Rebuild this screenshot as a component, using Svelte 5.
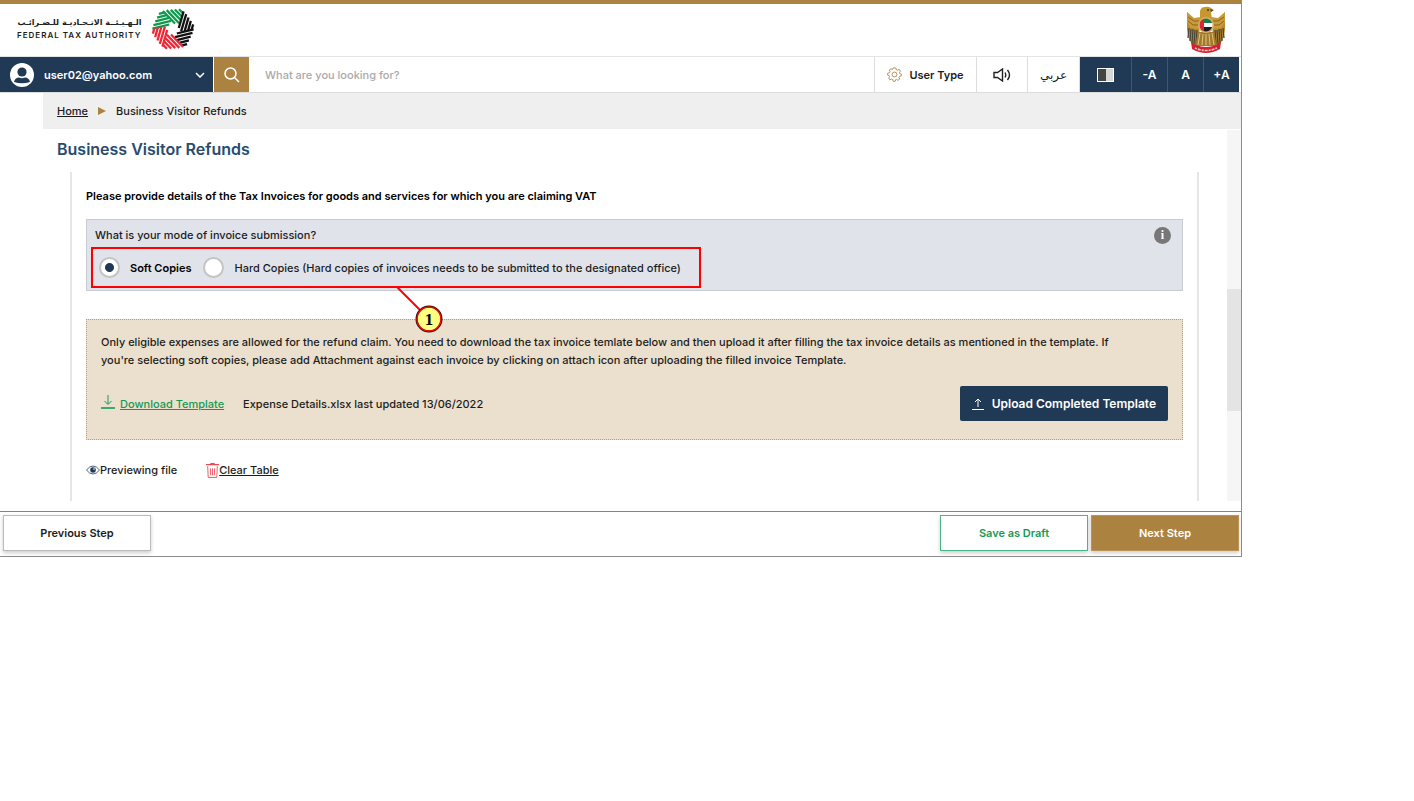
<script lang="ts">
	let search = $state('');
	let mode   = $state('soft');

	// Ring logo: six bundles of parallel strokes, turned around the centre
	const BUNDLES = [
		{ rot: -50, color: '#0b9a4c' },
		{ rot: 10,  color: '#0b9a4c' },
		{ rot: 70,  color: '#111' },
		{ rot: 130, color: '#111' },
		{ rot: 190, color: '#ee2737' },
		{ rot: 250, color: '#ee2737' },
	];
	const STROKES = [
		'M-13 -16 L1 -5.8',
		'M-9.5 -17.5 L5 -6.8',
		'M-5.5 -18.5 L6 -10.2',
		'M-1.5 -19.5 L6.5 -13.8',
		'M2.5 -20.5 L7 -17.300',
	];

	const SIZES = ['-A', 'A', '+A'];
</script>

<div class="app">
	<header class="brand-bar">
		<a class="brand" href="#home">
			<span class="brand-text">
				<span class="brand-ar" lang="ar" dir="rtl">الـهـيـئــة الاتـحـاديـة للـضـرائـب</span>
				<span class="brand-en">FEDERAL TAX AUTHORITY</span>
			</span>
			<svg class="ring-logo" viewBox="-22 -22 44 44" aria-hidden="true">
				{#each BUNDLES as b}
					<g transform="rotate({b.rot})" stroke={b.color} stroke-width="2.300">
						{#each STROKES as d}
							<path {d} />
						{/each}
					</g>
				{/each}
			</svg>
		</a>

		<!-- Falcon emblem -->
		<svg class="emblem" viewBox="0 0 40 48" role="img" aria-label="United Arab Emirates emblem">
			<path d="M5 11 L1 6 V24 L3 33 L7 40 L14 37 L13 14 Z" fill="#b98a2c" />
			<path d="M35 11 L39 6 V24 L37 33 L33 40 L26 37 L27 14 Z" fill="#b98a2c" />
			<path d="M1 6 L8 12 L15 11 L16 20 L12 23 L5 22 L1 16 Z" fill="#c99a3a" />
			<path d="M39 6 L32 12 L25 11 L24 20 L28 23 L35 22 L39 16 Z" fill="#c99a3a" />
			<path d="M3 22 L2 32 M5 23 L4 35 M7 23 L6 37 M9 24 L8 38 M11 24 L10 38 M37 22 L38 32 M35 23 L36 35 M33 23 L34 37 M31 24 L32 38 M29 24 L30 38" stroke="#4b4638" stroke-width="1.300" />
			<path d="M2 11 L8 15 L14 15 M2 15 L7 19 L13 19 M38 11 L32 15 L26 15 M38 15 L33 19 L27 19" fill="none" stroke="#8d6519" stroke-width="1" />
			<path d="M14 14 L14 5 Q15 1 19 1 Q24 0 27 4 L25 6 L26 14 Z" fill="#c7972f" />
			<circle cx="22" cy="4" r="1" fill="#45370f" />
			<path d="M24 3 L28 4 L25 6 Z" fill="#5f4a1a" />
			<path d="M12 26 L28 26 L31 40 H9 Z" fill="#a37a2c" />
			<path d="M14 27 L12 39 M17 28 L16 39 M20 28 V39 M23 28 L24 39 M26 27 L28 39" stroke="#e2c681" stroke-width="1" />
			<circle cx="20" cy="19" r="8" fill="#d2b06a" />
			<clipPath id="disc"><circle cx="20" cy="19" r="6.500" /></clipPath>
			<g clip-path="url(#disc)">
				<path d="M13 12 H27 V17 H13 Z" fill="#16804a" />
				<path d="M13 17 H27 V21 H13 Z" fill="#fff" />
				<path d="M13 21 H27 V26 H13 Z" fill="#1b1b1b" />
				<path d="M13 12 H18 V26 H13 Z" fill="#df2433" />
			</g>
			<path d="M5 36 L10 39 Q20 43 30 39 L35 36 L34 43 Q20 51 6 43 Z" fill="#d3212f" />
			<path d="M9 42 Q20 47 31 42" fill="none" stroke="#f5c8c4" stroke-width="1.6" stroke-dasharray="2 1 3 1" />
		</svg>
	</header>

	<nav class="toolbar">
		<button class="user" type="button">
			<svg class="avatar" viewBox="0 0 24 24" aria-hidden="true">
				<circle cx="12" cy="12" r="12" fill="#fff" />
				<circle cx="12" cy="9" r="4.6" fill="#203a56" />
				<path d="M4 19 Q5 14.500 9 14.500 Q12 16 15 14.500 Q19 14.500 20 19 Q12 21.500 4 19 Z" fill="#203a56" />
			</svg>
			<span>user02@yahoo.com</span>
			<svg class="chevron" viewBox="0 0 10 6" aria-hidden="true"><path d="M1 1 L5 5 L9 1" /></svg>
		</button>
		<button class="search-btn" type="button" aria-label="Search">
			<svg viewBox="0 0 16 16" aria-hidden="true">
				<circle cx="6.500" cy="6.500" r="5.500" />
				<path d="M10.500 10.500 L15 15" />
			</svg>
		</button>
		<input class="search" type="text" placeholder="What are you looking for?" aria-label="Search" bind:value={search} />
		<button class="tool user-type" type="button">
			<svg class="gear" viewBox="0 0 16 16" aria-hidden="true">
				<path d="M6.600 1 H9.400 L9.900 2.800 L11.300 3.400 L13 2.500 L14.300 4.500 L13.300 6 L13.600 7 L15.300 7.600 V9.400 L13.400 9.900 L12.800 11.300 L13.500 13 L11.600 14.200 L10.200 13.200 L9.200 13.500 L8.700 15.300 H6.700 L6.200 13.500 L4.800 12.900 L3 13.700 L1.800 11.800 L2.800 10.400 L2.500 9.300 L.7 8.700 V6.700 L2.600 6.200 L3.200 4.800 L2.500 3.100 L4.400 1.900 L5.800 2.900 Z" />
				<circle cx="8" cy="8" r="2.600" />
			</svg>
			User Type
		</button>
		<button class="tool sound" type="button" aria-label="Read aloud">
			<svg viewBox="0 0 18 14" aria-hidden="true">
				<path d="M1 4.500 H4.500 L9.500 1 V13 L4.500 9.500 H1 Z" />
				<path d="M12 4.500 Q13.500 7 12 9.500 M14.500 2 Q18.500 7 14.500 12" />
			</svg>
		</button>
		<button class="tool arabic" type="button" lang="ar">عربي</button>
		<button class="tool dark contrast" type="button" aria-label="Contrast"><span class="swatch"></span></button>
		{#each SIZES as s}
			<button class="tool dark size" type="button">{s}</button>
		{/each}
	</nav>

	<div class="crumbs">
		<a href="#home">Home</a>
		<span class="arrow" aria-hidden="true"></span>
		<span>Business Visitor Refunds</span>
	</div>

	<div class="body">
		<main class="content">
			<h1>Business Visitor Refunds</h1>

			<section class="panel">
				<h2>Please provide details of the Tax Invoices for goods and services for which you are claiming VAT</h2>

				<fieldset class="question">
					<div class="question-head">
						<span id="mode-label">What is your mode of invoice submission?</span>
						<button class="info" type="button" aria-label="Information">i</button>
					</div>
					<div class="choices" role="radiogroup" aria-labelledby="mode-label">
						<label class:picked={mode === 'soft'}>
							<input type="radio" name="mode" value="soft" bind:group={mode} />
							Soft Copies
						</label>
						<label class:picked={mode === 'hard'}>
							<input type="radio" name="mode" value="hard" bind:group={mode} />
							Hard Copies (Hard copies of invoices needs to be submitted to the designated office)
						</label>

						<!-- Numbered callout -->
						<span class="mark" aria-hidden="true"></span>
						<svg class="pin" viewBox="0 0 48 46" aria-hidden="true">
							<path d="M1 0 L24 23" stroke="#f00" stroke-width="2" />
							<circle cx="33" cy="32" r="12.500" fill="#ffff80" stroke="#111" stroke-width="2" />
							<circle cx="33" cy="32" r="12" fill="none" stroke="#f00" stroke-width="1.500" />
							<text x="33" y="38" text-anchor="middle">1</text>
						</svg>
					</div>
				</fieldset>

				<div class="notice">
					<p>Only eligible expenses are allowed for the refund claim. You need to download the tax invoice temlate below and then upload it after filling the tax invoice details as mentioned in the template. If you're selecting soft copies, please add Attachment against each invoice by clicking on attach icon after uploading the filled invoice Template.</p>
					<div class="notice-row">
						<a class="download" href="#template">
							<svg viewBox="0 0 14 14" aria-hidden="true">
								<path d="M7 0 V9 M3.500 6 L7 9.500 L10.500 6" stroke-width="1" />
								<path d="M0 13 H14" stroke-width="1.600" />
							</svg>
							<span>Download Template</span>
						</a>
						<span class="updated">Expense Details.xlsx last updated 13/06/2022</span>
						<button class="upload" type="button">
							<svg viewBox="0 0 12 12" aria-hidden="true">
								<path d="M6 9 V1 M3 4 L6 1 L9 4 M0 11.500 H12" />
							</svg>
							Upload Completed Template
						</button>
					</div>
				</div>

				<div class="file-row">
					<span class="preview">
						<svg class="eye" viewBox="0 0 14 10" aria-hidden="true">
							<path d="M.5 5 Q3.500 1 7 1 Q10.500 1 13.500 5 Q10.500 9 7 9 Q3.500 9 .5 5 Z" fill="#fff" stroke="#203a56" stroke-width=".8" />
							<circle cx="7" cy="5" r="2.800" fill="#203a56" />
							<circle cx="8" cy="4" r=".8" fill="#fff" />
						</svg>
						Previewing file
					</span>
					<a class="clear" href="#clear">
						<svg class="bin" viewBox="0 0 12 14" aria-hidden="true">
							<path d="M4 .6 H8 M0 1.600 H12" stroke-width="1.200" />
							<path d="M1.500 3 L2 13.500 H10 L10.500 3 M4 5 L4.300 11.500 M6 5 V11.500 M8 5 L7.700 11.500" stroke-width=".8" />
						</svg>
						<span>Clear Table</span>
					</a>
				</div>
			</section>
		</main>
		<div class="scroll" aria-hidden="true"><span class="thumb"></span></div>
	</div>

	<footer class="steps">
		<button class="step prev" type="button">Previous Step</button>
		<button class="step draft" type="button">Save as Draft</button>
		<button class="step next" type="button">Next Step</button>
	</footer>
</div>

<style>
	:global(body) {
		margin: 0;
		background: #fff;
	}

	.app {
		--navy: #203a56;
		--gold: #ac8240;
		--green: #159a55;
		box-sizing: border-box;
		max-width: 1242px;
		border-right: 1px solid #8c8c8c;
		border-bottom: 1px solid #8c8c8c;
		font-family: Inter, 'DejaVu Sans', sans-serif;
		font-size: 11px;
		font-weight: 500;
		line-height: 18px;
		color: #1c1c1c;
	}
	.app :global(*) { box-sizing: border-box; }
	button, input { font: inherit; color: inherit; }
	button {
		border: 0;
		padding: 0;
		background: none;
		cursor: pointer;
	}
	a { color: inherit; }

	/* ── Brand bar ── */
	.brand-bar {
		display: flex;
		align-items: center;
		justify-content: space-between;
		height: 57px;
		padding: 0 15px 0 17px;
		border-top: 4px solid var(--gold);
		border-bottom: 1px solid #e4e4e4;
	}
	.brand {
		display: flex;
		align-items: center;
		gap: 10px;
		padding-bottom: 3px;
		text-decoration: none;
	}
	.brand-text {
		display: flex;
		flex-direction: column;
		align-items: flex-end;
	}
	.brand-ar {
		font: bold 8px/13px 'DejaVu Sans', sans-serif;
	}
	.brand-en {
		font-size: 8px;
		font-weight: 600;
		line-height: 12px;
		letter-spacing: 1px;
	}
	.ring-logo { width: 44px; height: 44px; fill: none; }
	.emblem { width: 40px; height: 48px; }

	/* ── Toolbar ── */
	.toolbar {
		display: flex;
		height: 36px;
		padding-right: 2px;
		border-bottom: 1px solid #ddd;
	}
	.user {
		display: flex;
		align-items: center;
		gap: 10px;
		width: 213px;
		padding: 0 8px 0 10px;
		background: var(--navy);
		color: #fff;
		font-weight: 600;
		text-align: left;
	}
	.user span { flex: 1; }
	.avatar { width: 24px; height: 24px; }
	.chevron {
		width: 10px;
		height: 6px;
		fill: none;
		stroke: #fff;
		stroke-width: 1.5;
	}
	.search-btn {
		display: flex;
		align-items: center;
		justify-content: center;
		width: 35px;
		margin-left: 1px;
		background: var(--gold);
	}
	.search-btn svg {
		width: 16px;
		height: 16px;
		fill: none;
		stroke: #fff;
		stroke-width: 1.5;
	}
	.search {
		flex: 1;
		min-width: 0;
		padding: 0 16px;
		border: 0;
		outline: 0;
	}
	.search::placeholder { color: #a9a9a9; opacity: 1; }
	.tool {
		display: flex;
		align-items: center;
		justify-content: center;
		width: 52px;
		border-left: 1px solid #ddd;
	}
	.user-type { width: 102px; gap: 7px; font-weight: 600; }
	.gear {
		width: 15px;
		height: 15px;
		fill: none;
		stroke: #b48b4c;
		stroke-width: 1;
	}
	.sound { width: 51px; }
	.sound svg {
		width: 18px;
		height: 14px;
		fill: none;
		stroke: #222;
		stroke-width: 1.4;
	}
	.arabic { font: 12px 'DejaVu Sans', sans-serif; }
	.dark {
		background: var(--navy);
		color: #fff;
	}
	.size {
		width: 36px;
		border-color: #3f566e;
		font-size: 12px;
		font-weight: 600;
	}
	.swatch {
		width: 17px;
		height: 14px;
		border: 1px solid #fff;
		background: linear-gradient(90deg, #444 50%, #fff 50%, #fff 56%, #d6d6d6 56%);
	}

	/* ── Breadcrumbs ── */
	.crumbs {
		display: flex;
		align-items: center;
		gap: 10px;
		height: 36px;
		margin-left: 43px;
		padding-left: 14px;
		background: #efefef;
	}
	.arrow {
		border: 4px solid transparent;
		border-left: 8px solid var(--gold);
		border-right: 0;
	}

	/* ── Page body ── */
	.body {
		display: flex;
		padding-bottom: 10px;
	}
	.content {
		flex: 1;
		padding: 10px 28px 0 57px;
	}
	h1 {
		margin: 0 0 13px;
		font-size: 16px;
		font-weight: 600;
		line-height: 20px;
		color: #284b6e;
	}
	.panel {
		margin-left: 13px;
		padding: 16px 14px 22px;
		border: solid #e6e6e6;
		border-width: 0 2px;
	}
	h2 {
		margin: 0 0 14px;
		font-size: 11px;
		font-weight: 600;
		line-height: 17px;
		color: #000;
	}
	.scroll {
		width: 14px;
		margin-top: 1px;
		padding-top: 159px;
		background: #f6f6f6;
	}
	.thumb {
		display: block;
		height: 122px;
		background: #e4e4e4;
	}

	/* ── Question ── */
	.question {
		min-width: 0;
		margin: 0 0 28px;
		padding: 5px 4px 2px;
		border: 1px solid #c9cbd1;
		background: #e1e3eb;
	}
	.question-head {
		display: flex;
		align-items: center;
		justify-content: space-between;
		height: 22px;
		padding: 0 7px 2px 4px;
	}
	.info {
		width: 17px;
		height: 17px;
		border-radius: 50%;
		background: #777;
		color: #fff;
		font: bold 12px/17px 'Liberation Serif', serif;
	}
	.choices {
		position: relative;
		display: flex;
		align-items: center;
		gap: 12px;
		width: fit-content;
		height: 41px;
		padding: 0 20px 0 8px;
	}
	.choices label {
		display: flex;
		align-items: center;
		gap: 10px;
	}
	.choices .picked { font-weight: 600; color: #000; }
	.choices input {
		appearance: none;
		width: 21px;
		height: 21px;
		margin: 0;
		border: 2px solid #c4c4c4;
		border-radius: 50%;
		background: #fff;
	}
	.choices input:checked { background: radial-gradient(circle, var(--navy) 4px, #fff 5px); }
	.mark {
		position: absolute;
		inset: 0;
		border: 2px solid #f00;
		pointer-events: none;
	}
	.pin {
		position: absolute;
		top: 40px;
		left: 50%;
		width: 48px;
		height: 46px;
		pointer-events: none;
	}
	.pin text { font: bold 17px 'Liberation Serif', serif; }

	/* ── Template notice ── */
	.notice {
		padding: 13px 14px 18px;
		border: 1px dotted #c49a58;
		background: #ebe0cd;
	}
	.notice p {
		margin: 0 0 17px;
		padding-right: 30px;
	}
	.notice-row {
		display: flex;
		align-items: center;
	}
	.download {
		display: flex;
		align-items: center;
		gap: 5px;
		color: var(--green);
		text-decoration: none;
	}
	.download span, .clear span { text-decoration: underline; }
	.download svg {
		width: 14px;
		height: 14px;
		margin-bottom: 4px;
		fill: none;
		stroke: var(--green);
	}
	.updated { margin-left: 19px; }
	.upload {
		display: flex;
		align-items: center;
		gap: 8px;
		height: 35px;
		margin-left: auto;
		padding: 0 12px;
		border-radius: 2px;
		background: var(--navy);
		color: #fff;
		font-size: 12px;
		font-weight: 600;
	}
	.upload svg {
		width: 12px;
		height: 12px;
		fill: none;
		stroke: #fff;
		stroke-width: 1;
	}

	.file-row {
		display: flex;
		gap: 29px;
		margin-top: 21px;
	}
	.preview, .clear {
		display: flex;
		align-items: center;
	}
	.eye { width: 14px; height: 10px; }
	.bin {
		width: 13px;
		height: 15px;
		fill: none;
		stroke: #e8474f;
	}
	.clear { text-decoration: none; }

	/* ── Step buttons ── */
	.steps {
		display: flex;
		gap: 3px;
		padding: 3px 2px 5px 3px;
		border-top: 1px solid #7d868e;
	}
	.step {
		width: 148px;
		height: 36px;
		border: 1px solid #bbb;
		background: #fff;
		box-shadow: 0 2px 4px rgba(0, 0, 0, 0.2);
		font-weight: 600;
	}
	.prev { margin-right: auto; }
	.draft {
		border-color: #4db583;
		color: var(--green);
	}
	.next {
		border-color: #b8935a;
		background: var(--gold);
		color: #fff;
	}
</style>
